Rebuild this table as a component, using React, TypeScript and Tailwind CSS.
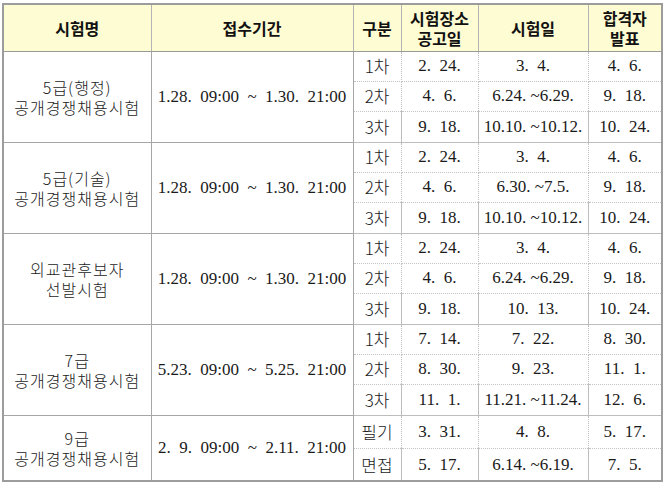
const serif = "font-['Liberation_Serif','Noto_Sans_CJK_KR',serif]";
const krSans = "font-['Noto_Sans_CJK_KR','Noto_Sans',sans-serif]";

type Sub = { label: string; notice: string; exam: string; result: string };
type Group = { name: string[]; period: string; subs: Sub[] };

const groups: Group[] = [
  {
    name: ['5급(행정)', '공개경쟁채용시험'],
    period: '1.28.  09:00  ~  1.30.  21:00',
    subs: [
      { label: '1차', notice: '2.  24.', exam: '3.  4.', result: '4.  6.' },
      { label: '2차', notice: '4.  6.', exam: '6.24. ~6.29.', result: '9.  18.' },
      { label: '3차', notice: '9.  18.', exam: '10.10. ~10.12.', result: '10.  24.' },
    ],
  },
  {
    name: ['5급(기술)', '공개경쟁채용시험'],
    period: '1.28.  09:00  ~  1.30.  21:00',
    subs: [
      { label: '1차', notice: '2.  24.', exam: '3.  4.', result: '4.  6.' },
      { label: '2차', notice: '4.  6.', exam: '6.30. ~7.5.', result: '9.  18.' },
      { label: '3차', notice: '9.  18.', exam: '10.10. ~10.12.', result: '10.  24.' },
    ],
  },
  {
    name: ['외교관후보자', '선발시험'],
    period: '1.28.  09:00  ~  1.30.  21:00',
    subs: [
      { label: '1차', notice: '2.  24.', exam: '3.  4.', result: '4.  6.' },
      { label: '2차', notice: '4.  6.', exam: '6.24. ~6.29.', result: '9.  18.' },
      { label: '3차', notice: '9.  18.', exam: '10.  13.', result: '10.  24.' },
    ],
  },
  {
    name: ['7급', '공개경쟁채용시험'],
    period: '5.23.  09:00  ~  5.25.  21:00',
    subs: [
      { label: '1차', notice: '7.  14.', exam: '7.  22.', result: '8.  30.' },
      { label: '2차', notice: '8.  30.', exam: '9.  23.', result: '11.  1.' },
      { label: '3차', notice: '11.  1.', exam: '11.21. ~11.24.', result: '12.  6.' },
    ],
  },
  {
    name: ['9급', '공개경쟁채용시험'],
    period: '2.  9.  09:00  ~  2.11.  21:00',
    subs: [
      { label: '필기', notice: '3.  31.', exam: '4.  8.', result: '5.  17.' },
      { label: '면접', notice: '5.  17.', exam: '6.14. ~6.19.', result: '7.  5.' },
    ],
  },
];

const th = `border border-[#b4b4b4] border-b-[#9a9a9a] bg-[#fefcd2] text-[16px] font-bold leading-[20px] text-[#111] text-center ${krSans}`;
const td = `border-x border-[#bdbdbd] text-center text-[17px] text-[#1a1a1a] whitespace-pre ${serif}`;

export default function App() {
  return (
    <div className="w-[664px] h-[486px] bg-white pl-[2px] pt-[3px]">
      <table className="table-fixed border-collapse border-2 border-[#9c9c9c] w-[659px]">
        <colgroup>
          <col className="w-[148px]" />
          <col className="w-[202px]" />
          <col className="w-[48px]" />
          <col className="w-[77px]" />
          <col className="w-[110px]" />
          <col className="w-[74px]" />
        </colgroup>
        <thead>
          <tr className="h-[47px]">
            <th className={th}>시험명</th>
            <th className={th}>접수기간</th>
            <th className={th}>구분</th>
            <th className={th}>
              시험장소
              <br />
              공고일
            </th>
            <th className={th}>시험일</th>
            <th className={th}>
              합격자
              <br />
              발표
            </th>
          </tr>
        </thead>
        <tbody>
          {groups.map((g, gi) =>
            g.subs.map((s, si) => {
              const last = si === g.subs.length - 1;
              const rowH = g.subs.length === 2 ? 'h-[33px]' : last ? 'h-[31px]' : 'h-[30px]';
              const rowBorder = last
                ? 'border-b border-[#a6a6a6]'
                : 'border-b border-dotted border-b-[#c4c4c4]';
              return (
                <tr key={`${gi}-${si}`} className={rowH}>
                  {si === 0 && (
                    <>
                      <td
                        rowSpan={g.subs.length}
                        className={`border border-[#a6a6a6] text-center text-[16px] leading-[20px] tracking-[1px] text-[#1a1a1a] ${krSans} font-light`}
                      >
                        {g.name.map((n) => (
                          <div key={n}>{n}</div>
                        ))}
                      </td>
                      <td
                        rowSpan={g.subs.length}
                        className={`border border-[#a6a6a6] text-center text-[17px] text-[#1a1a1a] whitespace-pre ${serif}`}
                      >
                        {g.period}
                      </td>
                    </>
                  )}
                  <td className={`${td} ${rowBorder} text-[16px] ${krSans} font-light`}>{s.label}</td>
                  <td className={`${td} ${rowBorder}`}>{s.notice}</td>
                  <td className={`${td} ${rowBorder}`}>{s.exam}</td>
                  <td className={`${td} ${rowBorder}`}>{s.result}</td>
                </tr>
              );
            })
          )}
        </tbody>
      </table>
    </div>
  );
}
